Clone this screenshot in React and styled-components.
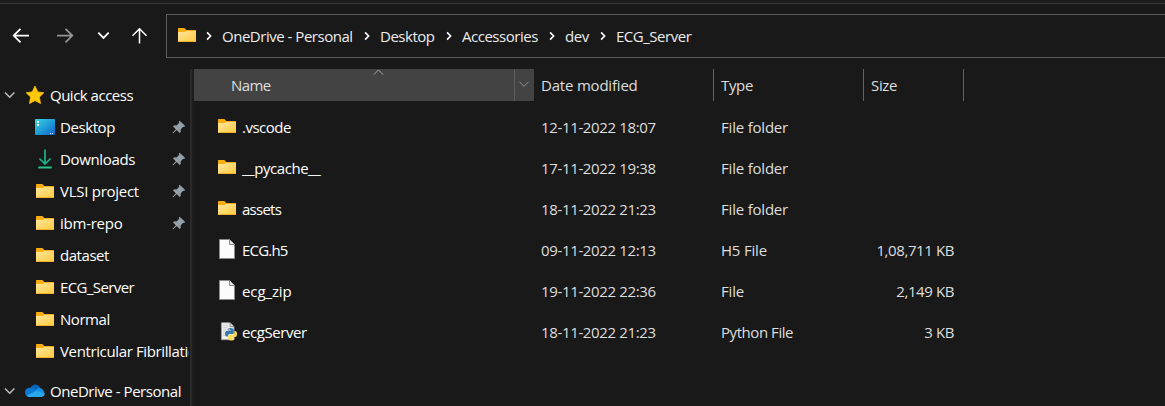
import React from "react";
import styled, { createGlobalStyle } from "styled-components";

const GlobalStyle = createGlobalStyle`
  * { box-sizing: border-box; }
  body { margin: 0; background: #191919; overflow: hidden; }
`;

const Window = styled.div`
  height: 406px;
  display: flex;
  flex-direction: column;
  overflow: hidden;
  background: #191919;
  color: #fff;
  font: 15px/20px "Open Sans", "Noto Sans", sans-serif;
  white-space: nowrap;
`;

const TitleEdge = styled.div`
  flex: none;
  height: 4px;
  background: #1d1d1d;
  border-bottom: 1px solid #3b3b3b;
`;

const Toolbar = styled.header`
  flex: none;
  height: 65px;
  padding-top: 10px;
  display: flex;
  align-items: flex-start;
`;

const NavButtons = styled.div`
  width: 166px;
  height: 44px;
  flex: none;
  svg { display: block; }
`;

const AddressBar = styled.div`
  flex: 1;
  height: 44px;
  border: 1px solid #5c5c5c;
  border-right: 0;
  padding-left: 11px;
  display: flex;
  align-items: center;
  > svg { flex: none; margin-right: 1px; }
`;

const Text = styled.span`
  display: block;
  flex: none;
  letter-spacing: ${(p) => p.$ls ?? -0.35}px;
  color: ${(p) => p.$color ?? "#fff"};
`;

const Crumb = styled.div`
  display: flex;
  align-items: center;
  width: ${(p) => p.$width}px;
  > svg { flex: none; margin: 0 10px 0 9px; }
`;

const Body = styled.div`
  flex: 1;
  min-height: 0;
  display: flex;
`;

const Sidebar = styled.nav`
  width: 190px;
  flex: none;
  padding-top: 10px;
  overflow: hidden;
`;

const Splitter = styled.div`
  width: 4px;
  flex: none;
  border-left: 2px solid #292929;
  background: #1e1e1e;
`;

const NavRow = styled.div`
  height: 32px;
  margin-top: ${(p) => (p.$gap ? 8 : 0)}px;
  display: flex;
  align-items: center;
`;

const Chevron = styled.span`
  width: 25px;
  flex: none;
  padding-left: 4px;
  svg { display: block; }
`;

const NavIcon = styled.span`
  width: 25px;
  margin-left: ${(p) => (p.$root ? 0 : 35)}px;
  flex: none;
  svg { display: block; }
`;

const NavLabel = styled.div`
  width: ${(p) => (p.$root ? 138 : 129)}px;
  overflow: hidden;
  flex: none;
`;

const PinnedLabel = styled(NavLabel)`
  width: 112px;
`;

const Files = styled.main`
  flex: 1;
`;

const Row = styled.div`
  display: grid;
  grid-template-columns: 340px 180px 150px 100px;
  height: 41px;
  align-items: center;
`;

const HeaderRow = styled(Row)`
  height: 32px;
  margin-bottom: 5px;
  align-items: stretch;
`;

const HeaderCell = styled.div`
  display: flex;
  align-items: center;
  padding-left: 7px;
  border-right: 1px solid #636363;
`;

const NameHeader = styled(HeaderCell)`
  background: #434343;
  border: 0;
  padding-left: 37px;
  position: relative;
`;

const SortMark = styled.svg`
  position: absolute;
  left: 179px;
  top: 0;
`;

const DropArrow = styled.span`
  margin-left: auto;
  width: 20px;
  height: 32px;
  padding: 0 2px 2px 0;
  border-left: 1px solid #5e5e5e;
  display: grid;
  place-items: center;
`;

const NameCell = styled.div`
  display: flex;
  align-items: center;
  padding-left: 24px;
`;

const FileIcon = styled.span`
  width: 24px;
  flex: none;
  svg { display: block; }
`;

const Cell = styled.div`
  padding-left: 7px;
  display: flex;
  justify-content: ${(p) => (p.$end ? "flex-end" : "flex-start")};
  padding-right: ${(p) => (p.$end ? 10 : 0)}px;
`;

const Folder = ({ top = 0, left = 0, height = 20 }) => (
  <svg width={18 + left} height={height} viewBox={`${-left} ${-top} ${18 + left} ${height}`}>
    <defs>
      <linearGradient id="folder" x1="0" y1="0" x2="1" y2="1">
        <stop offset="0" stopColor="#ffe6a0" />
        <stop offset="1" stopColor="#ffca3c" />
      </linearGradient>
    </defs>
    <path d="M0 3.5Q0 3 .6 3H6Q6.6 3 7 3.5L8.3 5H17.4Q18 5 18 5.6V10H0Z" fill="#f8ae13" />
    <path d="M0 7H6.3Q6.9 7 7.5 6.5L8 6H18V16.4Q18 17 17.4 17H.6Q0 17 0 16.4Z" fill="url(#folder)" />
    <path d="M.3 16.5H17.7" stroke="#efb02b" />
  </svg>
);

const NavFolder = () => <Folder left={1} />;
const FileFolder = () => <Folder height={21} />;

const Star = () => (
  <svg width="20" height="20" viewBox="0 0 20 20">
    <path d="M10 1.1L12.8 6.9L18.8 7.8L14.4 12.1L15.5 18.5L10 15.6L4.5 18.5L5.6 12.1L1.2 7.8L7.2 6.9Z" fill="#ffc908" stroke="#ffc20a" strokeWidth=".8" strokeLinejoin="round" />
  </svg>
);

const DesktopIcon = () => (
  <svg width="20" height="20" viewBox="0 -1 20 20">
    <defs>
      <linearGradient id="desk" x1="0" y1="0" x2="1" y2="1">
        <stop offset="0" stopColor="#38d5e5" />
        <stop offset="1" stopColor="#0c65ca" />
      </linearGradient>
    </defs>
    <rect y="1" width="20" height="16" rx="1" fill="url(#desk)" />
    <path d="M2 3h2v2H2zM2 6h2v2H2zM15 15h1v1h-1zM17 15h1v1h-1z" fill="#e9fbff" />
  </svg>
);

const DownloadIcon = () => (
  <svg width="20" height="20" viewBox="0 -.5 20 20" fill="none" strokeWidth="1.7">
    <path d="M10 0V14.3M4.4 9L10 14.5L15.6 9" stroke="#1db38e" />
    <path d="M4 18H16" stroke="#25c78d" strokeWidth="1.8" strokeLinecap="round" />
  </svg>
);

const Cloud = () => (
  <svg width="20" height="20" viewBox="0 0 20 20">
    <path d="M5.5 7C7 2.3 13.4 2.2 15.3 7L10 11Z" fill="#0b63b8" />
    <path d="M3.8 15.8A4.3 4.3 0 0 1 5.2 6.8Q7.2 6.2 9 7.5L17 14Z" fill="#0878d2" />
    <path d="M10.2 9.2Q12 6.6 15 7.1Q17.3 7.2 18.4 9.5L20 13L15 13Z" fill="#168fe2" />
    <path d="M1.6 14.4L11 10.1Q12.6 9.6 14 10.4L19.8 13.2Q19 16 16.4 16H4.4Q2.5 16 1.6 14.4Z" fill="#28a8ea" />
  </svg>
);

const Pin = () => (
  <svg width="14" height="14" viewBox="0 0 14 14">
    <path d="M7.7.7L13.2 6.1L12 7L11.2 6.8L8.8 9.2L8.6 12.3L7.6 13L4.7 10.1L1 13.5L.4 13.1L3.8 9.2L1 6.4L1.8 5.4L4.8 5.2L7.2 2.8L7 1.5Z" fill="#929ea8" />
  </svg>
);

const Expander = () => (
  <svg width="12" height="12" viewBox="0 0 12 12">
    <path d="M1 3.5L5.7 8.2L10.4 3.5" fill="none" stroke="#b9b9b9" strokeWidth="1.6" />
  </svg>
);

const CrumbArrow = () => (
  <svg width="6" height="12" viewBox="0 0 6 12">
    <path d="M1.1 2.4L4.6 6L1.1 9.6" fill="none" stroke="#fff" strokeWidth="1.6" />
  </svg>
);

const Page = () => (
  <svg width="18" height="21" viewBox="0 1 18 21">
    <path d="M1.5 1.5H11.5L16.5 6.5V20.5H1.5Z" fill="#fcfcfc" stroke="#8b8b8b" />
    <path d="M11.5 1.5V6.5H16.5" fill="#e4e4e4" stroke="#8b8b8b" />
  </svg>
);

const PythonPage = () => (
  <svg width="20" height="21" viewBox="0 .8 20 21">
    <path d="M3.4 2.5H12L16 6.5V19.5H3.4Z" fill="#f0f0f0" stroke="#999" strokeWidth=".8" />
    <path d="M12 2.5V6.5H16" fill="#ddd" stroke="#777" strokeWidth=".8" />
    <path d="M5 5.5H10M5 7.5H10M5 9.5H8M5 11.5H7M5 13.5H7M5 15.5H8" stroke="#c2c2c2" strokeWidth=".8" />
    <path d="M9.5 9.4Q9.5 7.8 12.3 7.8Q15.7 7.8 15.7 9.8V12.4Q15.7 13.9 14.2 13.9H11.6Q10 13.9 10 15.5V16.4H8.7Q7 16.4 7 13.6Q7 10.6 9.2 10.5H12.8V10H9.5Z" fill="#3878ad" />
    <path d="M16.4 10.8H17.5Q19 10.9 19 13.7Q19 16.7 17.1 16.8H13.2V17.4H16.4V18.4Q16.4 20.3 13.3 20.3Q10.2 20.3 10.2 18.4V16Q10.2 14.5 11.9 14.5H14.6Q16.4 14.5 16.4 12.7Z" fill="#ffdc50" />
    <circle cx="11.1" cy="9.3" r=".6" fill="#fff" />
    <circle cx="14.8" cy="18.9" r=".6" fill="#fff" />
  </svg>
);

const crumbs = [
  ["OneDrive - Personal", 158],
  ["Desktop", 82],
  ["Accessories", 103],
  ["dev", 51],
  ["ECG_Server", 110],
];

const shortcuts = [
  ["Desktop", DesktopIcon, true, -0.42],
  ["Downloads", DownloadIcon, true, -0.35],
  ["VLSI project", NavFolder, true, -0.27],
  ["ibm-repo", NavFolder, true, -0.24],
  ["dataset", NavFolder, false, -0.45],
  ["ECG_Server", NavFolder, false, -0.6],
  ["Normal", NavFolder, false, -0.45],
  ["Ventricular Fibrillation", NavFolder, false, -0.37],
];

const files = [
  [".vscode", FileFolder, "12-11-2022 18:07", "File folder", "", -0.5],
  ["__pycache__", FileFolder, "17-11-2022 19:38", "File folder", "", -0.45],
  ["assets", FileFolder, "18-11-2022 21:23", "File folder", "", -0.75],
  ["ECG.h5", Page, "09-11-2022 12:13", "H5 File", "1,08,711 KB", -0.8],
  ["ecg_zip", Page, "19-11-2022 22:36", "File", "2,149 KB", -0.1],
  ["ecgServer", PythonPage, "18-11-2022 21:23", "Python File", "3 KB", -0.42],
];

const typeSpacing = { "File folder": -0.2, "H5 File": -0.2, File: -0.2, "Python File": -0.44 };

export default function App() {
  return (
    <Window>
      <GlobalStyle />
      <TitleEdge />
      <Toolbar>
        <NavButtons>
          <svg width="166" height="44" viewBox="0 14 166 44" fill="none" strokeWidth="1.8">
            <path d="M29 35.6H14M20.5 28.8L13.7 35.6L20.5 42.4" stroke="#fff" />
            <path d="M57 35.6H72M65.5 28.8L72.3 35.6L65.5 42.4" stroke="#949494" />
            <path d="M98.3 32.7L103.5 37.9L108.7 32.7" stroke="#fff" />
            <path d="M139.5 43.5V29M132.5 35.8L139.5 28.8L146.5 35.8" stroke="#fff" strokeWidth="1.5" />
          </svg>
        </NavButtons>
        <AddressBar>
          <Folder top={-1} />
          {crumbs.map(([label, width]) => (
            <Crumb key={label} $width={width}>
              <CrumbArrow />
              <Text $color="#ececec" $ls={-0.48}>{label}</Text>
            </Crumb>
          ))}
        </AddressBar>
      </Toolbar>
      <Body>
        <Sidebar>
          <NavRow>
            <Chevron><Expander /></Chevron>
            <NavIcon $root><Star /></NavIcon>
            <NavLabel $root><Text $ls={-0.5}>Quick access</Text></NavLabel>
          </NavRow>
          {shortcuts.map(([label, Icon, pinned, spacing]) => {
            const Label = pinned ? PinnedLabel : NavLabel;
            return (
              <NavRow key={label}>
                <NavIcon><Icon /></NavIcon>
                <Label><Text $ls={spacing}>{label}</Text></Label>
                {pinned && <Pin />}
              </NavRow>
            );
          })}
          <NavRow $gap>
            <Chevron><Expander /></Chevron>
            <NavIcon $root><Cloud /></NavIcon>
            <NavLabel $root><Text $ls={-0.46}>OneDrive - Personal</Text></NavLabel>
          </NavRow>
        </Sidebar>
        <Splitter />
        <Files>
          <HeaderRow>
            <NameHeader>
              <Text $color="#dedede" $ls={-0.6}>Name</Text>
              <SortMark width="11" height="7" viewBox="0 0 11 7">
                <path d="M1 5.5L5.5 1L10 5.5" fill="none" stroke="#a8a8a8" />
              </SortMark>
              <DropArrow>
                <svg width="10" height="7" viewBox="0 0 10 7">
                  <path d="M.6 1L5 5.4L9.4 1" fill="none" stroke="#929292" />
                </svg>
              </DropArrow>
            </NameHeader>
            <HeaderCell><Text $color="#dedede" $ls={-0.2}>Date modified</Text></HeaderCell>
            <HeaderCell><Text $color="#dedede">Type</Text></HeaderCell>
            <HeaderCell><Text $color="#dedede">Size</Text></HeaderCell>
          </HeaderRow>
          {files.map(([name, Icon, date, type, size, spacing]) => (
            <Row key={name}>
              <NameCell>
                <FileIcon><Icon /></FileIcon>
                <Text $ls={spacing}>{name}</Text>
              </NameCell>
              <Cell><Text $color="#dedede">{date}</Text></Cell>
              <Cell><Text $color="#dedede" $ls={typeSpacing[type]}>{type}</Text></Cell>
              <Cell $end><Text $color="#dedede" $ls={-0.4}>{size}</Text></Cell>
            </Row>
          ))}
        </Files>
      </Body>
    </Window>
  );
}
